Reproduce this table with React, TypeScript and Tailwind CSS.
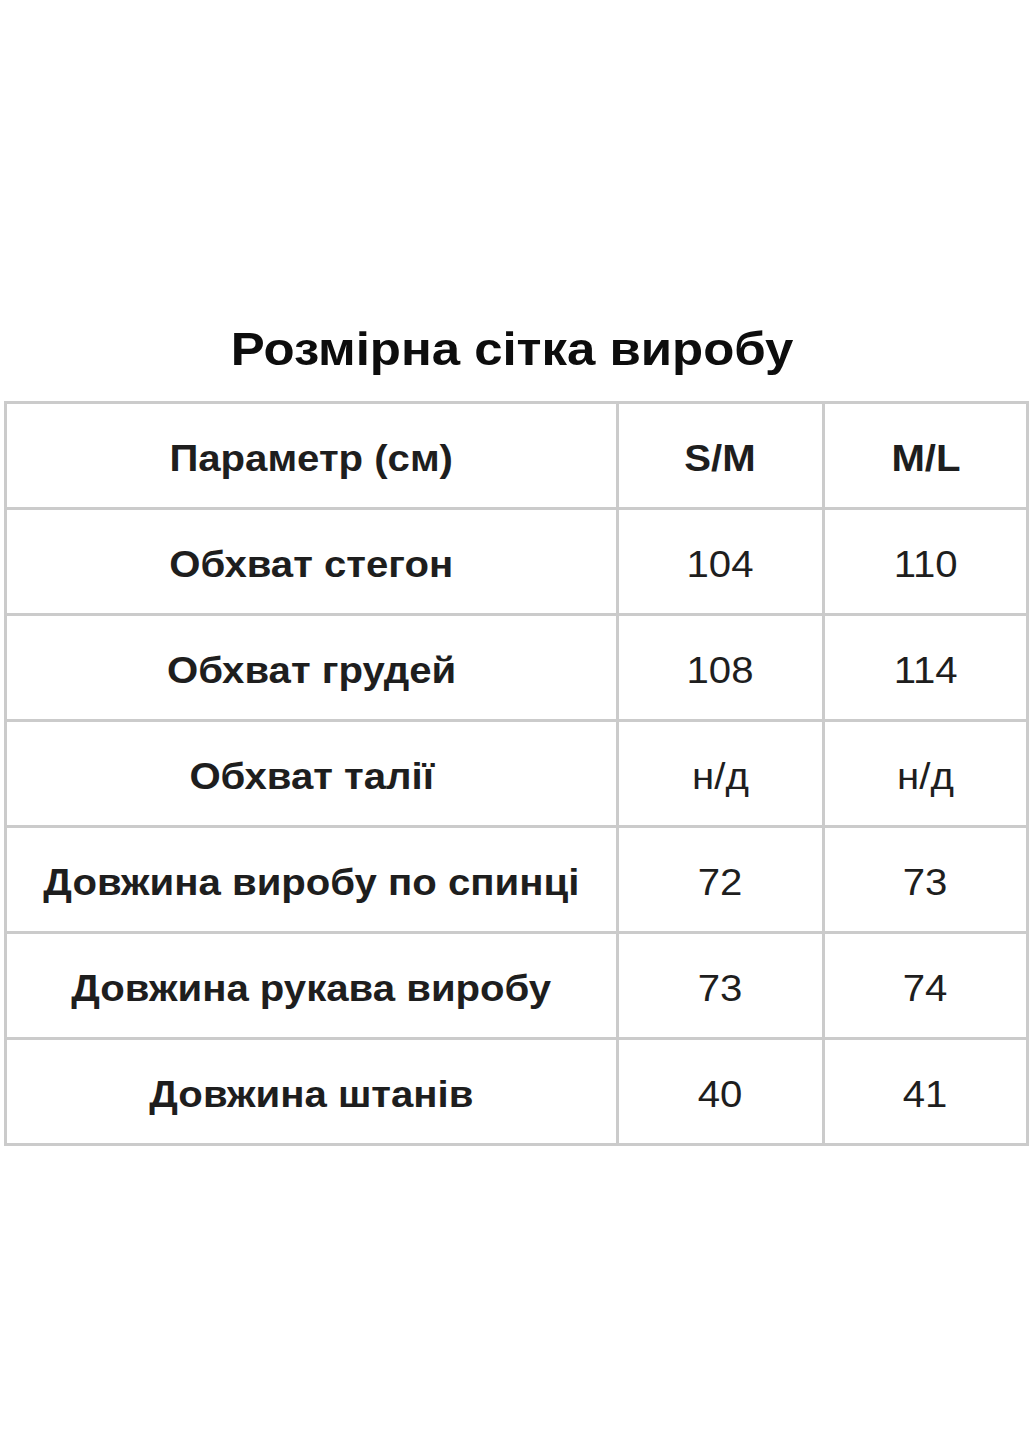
import React from "react";

const rows: [string, string, string][] = [
  ["Обхват стегон", "104", "110"],
  ["Обхват грудей", "108", "114"],
  ["Обхват талії", "н/д", "н/д"],
  ["Довжина виробу по спинці", "72", "73"],
  ["Довжина рукава виробу", "73", "74"],
  ["Довжина штанів", "40", "41"],
];

const cell = "bg-white h-[103px] flex items-center justify-center pt-[7px] text-[36px]";

function T({ children, bold }: { children: React.ReactNode; bold?: boolean }) {
  return (
    <span className={`inline-block whitespace-nowrap scale-x-[1.115] ${bold ? "font-bold" : ""}`}>{children}</span>
  );
}

export default function App() {
  return (
    <div
      lang="uk"
      className="w-[1035px] h-[1440px] bg-white text-[#1e1e1e]"
      style={{ fontFamily: '"Liberation Sans", Arial, sans-serif' }}
    >
      <div className="pt-[320px] pl-[4px]">
        <div className="w-[1025px] flex justify-center pr-[8px] h-[81px]">
          <h1 className="text-[46px] leading-[58px] font-bold text-[#0d0d0d]">
            <span className="inline-block whitespace-nowrap scale-x-[1.107]">Розмірна сітка виробу</span>
          </h1>
        </div>
        <div className="w-[1025px] grid grid-cols-[609px_203px_201px] gap-[3px] p-[3px] bg-[#cbcbcb]">
          <div className={cell}><T bold>Параметр (см)</T></div>
          <div className={cell}><T bold>S/M</T></div>
          <div className={cell}><T bold>M/L</T></div>
          {rows.map(([a, b, c]) => (
            <React.Fragment key={a}>
              <div className={cell}><T bold>{a}</T></div>
              <div className={cell}><T>{b}</T></div>
              <div className={cell}><T>{c}</T></div>
            </React.Fragment>
          ))}
        </div>
      </div>
    </div>
  );
}
